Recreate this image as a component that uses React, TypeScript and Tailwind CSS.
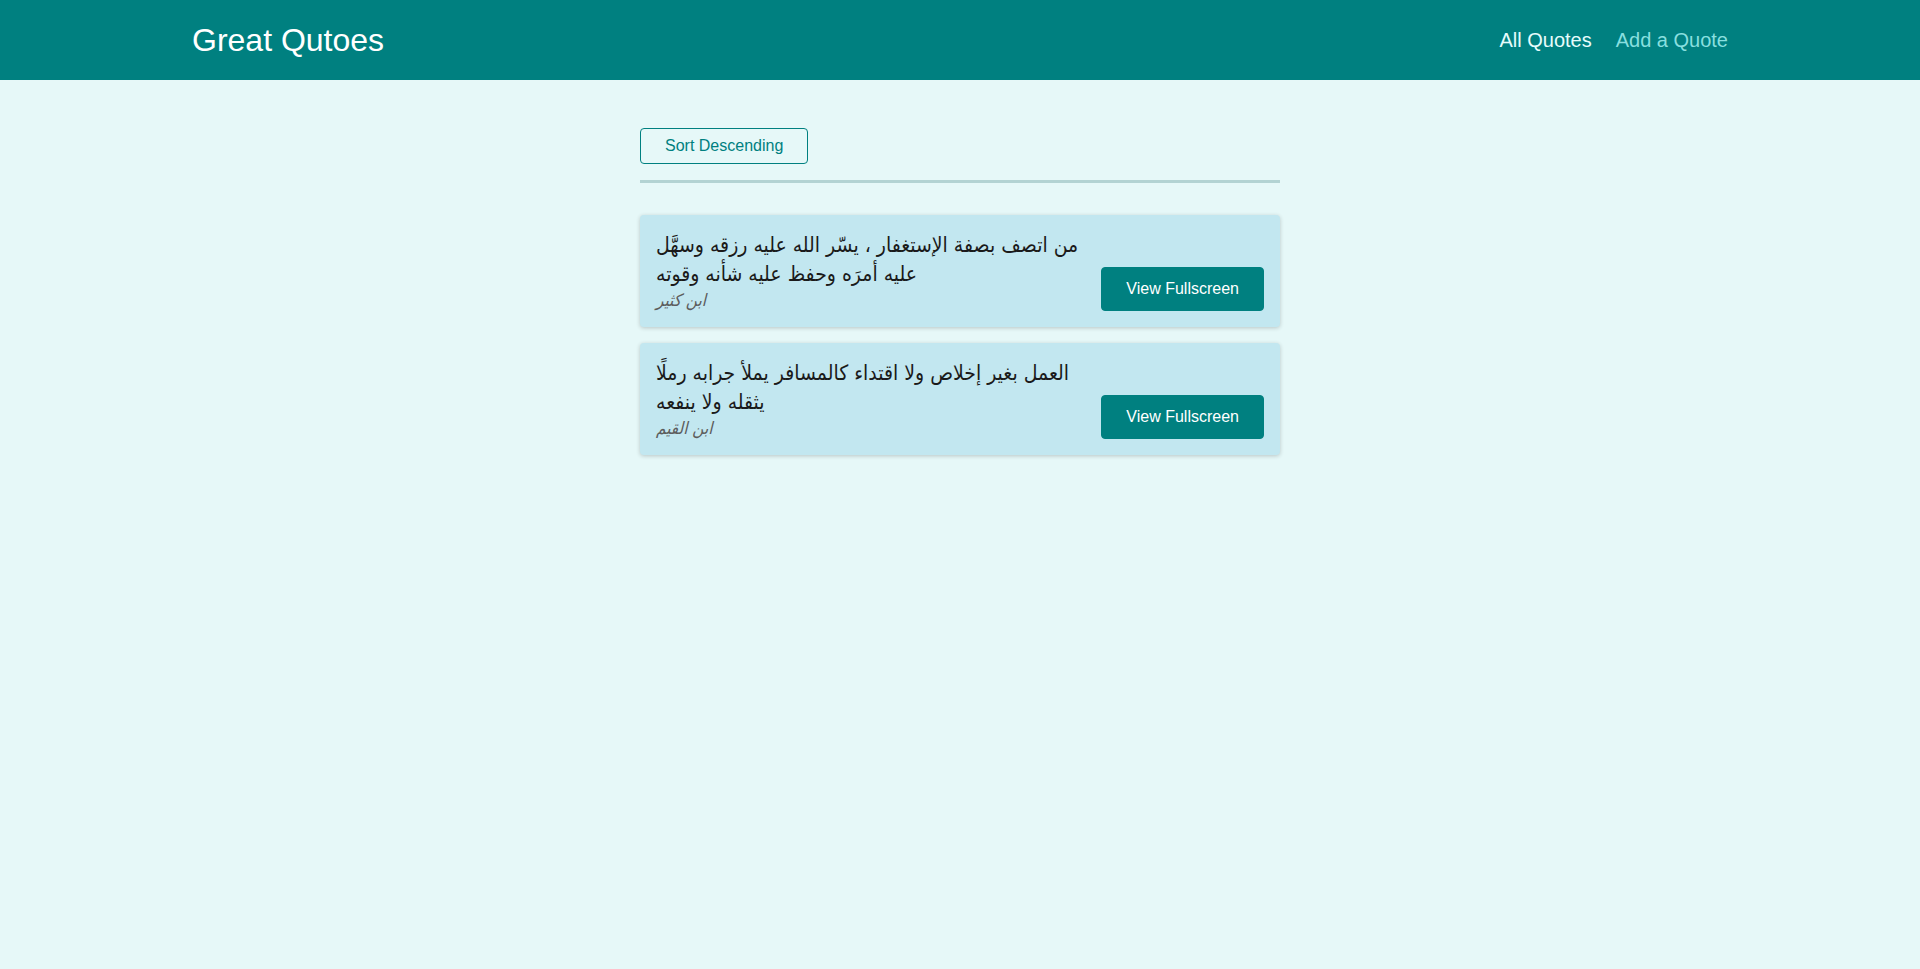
const quotes = [
  {
    id: "q1",
    text: "من اتصف بصفة الإستغفار ، يسّر الله عليه رزقه وسهَّل عليه أمرَه وحفظ عليه شأنه وقوته",
    author: "ابن كثير",
  },
  {
    id: "q2",
    text: "العمل بغير إخلاص ولا اقتداء كالمسافر يملأ جرابه رملًا يثقله ولا ينفعه",
    author: "ابن القيم",
  },
];

const font = "font-['Liberation_Sans','DejaVu_Sans',sans-serif]";

const Header = () => {
  return (
    <header className="flex h-20 w-full items-center justify-between bg-[#008080] px-[10%]">
      <div className="text-[32px] text-white">Great Qutoes</div>
      <nav>
        <ul className="flex items-center gap-6 text-xl">
          <li className="text-[#e6fcfc]">All Quotes</li>
          <li className="text-[#88dfdf]">Add a Quote</li>
        </ul>
      </nav>
    </header>
  );
};

const QuoteItem = ({ text, author }: { text: string; author: string }) => {
  return (
    <li className="flex items-end justify-between rounded bg-[#c2e7f0] p-4 shadow-[0_1px_4px_rgba(0,0,0,0.2)]">
      <figure>
        <blockquote className="max-w-[450px]">
          <p className="font-['DejaVu_Sans_Condensed','DejaVu_Sans',sans-serif] text-[21px] leading-[29px] text-[#1a1a1a]">
            {text}
          </p>
        </blockquote>
        <figcaption className="font-['DejaVu_Sans_Condensed','DejaVu_Sans',sans-serif] text-[17px] italic leading-[22px] text-[#5c5c5c]">
          {author}
        </figcaption>
      </figure>
      <button className="shrink-0 rounded border border-[#008080] bg-[#008080] px-6 py-3 text-base leading-[18px] text-white">
        View Fullscreen
      </button>
    </li>
  );
};

export default function App() {
  return (
    <div className={`min-h-[969px] bg-[#e6f8f8] ${font}`}>
      <Header />
      <main className="mx-auto mt-12 w-[90%] max-w-[640px]">
        <div className="border-b-[3px] border-[#b3d3d3] pb-4">
          <button className="rounded border border-[#008080] px-6 py-2 text-base leading-[18px] text-[#008080]">
            Sort Descending
          </button>
        </div>
        <ul className="mt-8 flex flex-col gap-4">
          {quotes.map((q) => (
            <QuoteItem key={q.id} text={q.text} author={q.author} />
          ))}
        </ul>
      </main>
    </div>
  );
}
